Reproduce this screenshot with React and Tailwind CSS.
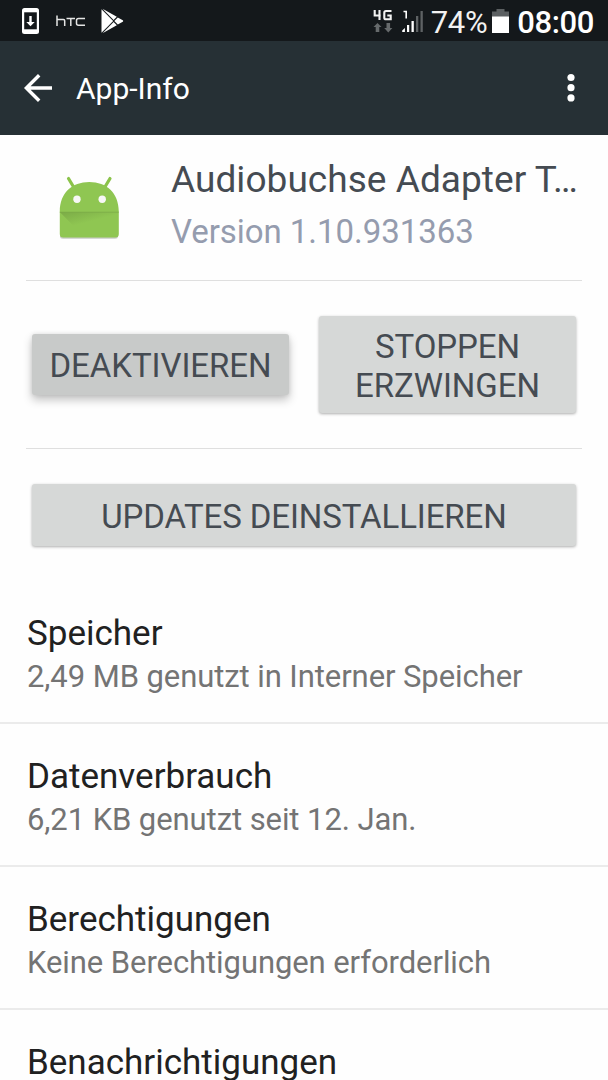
const settings = [
  { title: "Speicher", detail: "2,49 MB genutzt in Interner Speicher" },
  { title: "Datenverbrauch", detail: "6,21 KB genutzt seit 12. Jan." },
  { title: "Berechtigungen", detail: "Keine Berechtigungen erforderlich" },
];

function StatusBar() {
  return (
    <div className="flex h-[41px] shrink-0 items-center bg-[#14181b] text-white">
      <svg className="ml-[21px] h-[28px] w-[19px]" viewBox="0 0 19 28">
        <rect x="1" y="1" width="17" height="26" rx="2.5" fill="#fff" />
        <rect x="3.2" y="5.3" width="12.6" height="17" fill="#14181b" />
        <path d="M8.3 9h2.4v6h3l-4.2 4.3L5.3 15h3z" fill="#fff" />
      </svg>
      <svg className="ml-[16px] h-[12px] w-[30px]" viewBox="0 0 30 12" fill="none" stroke="#e5e5e5" strokeWidth="1.5">
        <path d="M1 .5v10.500M1 4.500h6.500q1.200 0 1.200 1.200V11M10.500 3.500h8.500M14.800 3.500V11M29 3.500h-6.500q-2 0-2 2v3q0 1.700 2 1.700H29" />
      </svg>
      <svg className="ml-[14px] h-[26px] w-[24px]" viewBox="0 0 24 26">
        <path d="M1.500 1.200v23.600L13.200 13z" fill="#fff" />
        <path d="M2.500.7 16.800 8.800 13.600 12z" fill="#fff" />
        <path d="M2.500 25.300 16.800 17.200 13.600 14z" fill="#fff" />
        <path d="m17.800 9.400 5 2.900q.9.700 0 1.400l-5 2.900L14.300 13z" fill="#fff" />
      </svg>
      <svg className="mt-[2px] ml-auto h-[28px] w-[20px]" viewBox="0 0 20 28" fill="none">
        <path d="M1.700 2v5.500h6M6.500 2v10M18.500 3h-5.500q-1.700 0-1.700 1.700v5q0 1.600 1.700 1.600h4.700V7.500h-3.400" stroke="#f3f3f3" strokeWidth="2.100" />
        <path d="M4.500 15 8.500 19H6.300v5H2.700v-5H.5zM13.500 15h3.600v5h2.300l-4.100 4.500-4.100-4.500h2.300z" fill="#666a6c" />
      </svg>
      <svg className="ml-[8px] h-[24px] w-[23px]" viewBox="0 0 23 24">
        <path d="M2.500 2.500h2.700v7" fill="none" stroke="#fff" strokeWidth="1.600" />
        <path d="M1.200 23v-1.500l2.700-2.500v4zM6 23v-7h2.200v7zM10.500 23V12h2.300v11z" fill="#fff" />
        <path d="M15 23V7h2.300v16zM19.500 23V2h2.300v21z" fill="#5e6264" />
      </svg>
      <span className="ml-[7px] pt-[4px] text-[31px] leading-[40px] tracking-[-0.3px] text-[#f2f2f2]">74%</span>
      <svg className="ml-[5px] h-[26px] w-[17px]" viewBox="0 0 17 26">
        <path d="M4.500 1h8v2.500H17V9H0V3.500h4.500z" fill="#5c6062" />
        <path d="M0 8.500h17V25H0z" fill="#fff" />
      </svg>
      <span className="mr-[14px] ml-[8px] pt-[4px] text-[31px] leading-[40px] font-medium tracking-[-0.400px]">08:00</span>
    </div>
  );
}

function AppBar() {
  return (
    <header className="flex h-[94px] shrink-0 items-center bg-[#263035] text-white">
      <svg className="ml-[23px] h-[30px] w-[30px]" viewBox="0 0 30 30" fill="none" stroke="#fff" strokeWidth="3.400">
        <path d="M29 15H3.500M16.200 2.200 3.400 15l12.800 12.800" />
      </svg>
      <h1 className="ml-[23px] pt-[2px] text-[30px] leading-[36px]">App-Info</h1>
      <svg className="mr-[33px] ml-auto h-[30px] w-[8px]" viewBox="0 0 8 30" fill="#fff">
        <circle cx="4" cy="4.500" r="3.600" />
        <circle cx="4" cy="14.700" r="3.600" />
        <circle cx="4" cy="24.900" r="3.600" />
      </svg>
    </header>
  );
}

function AndroidIcon() {
  return (
    <svg className="mt-[39px] ml-[31px] h-[66px] w-[64px] shrink-0" viewBox="0 0 64 66">
      <defs>
        <linearGradient id="fold" x1="0" y1="0" x2="0.600" y2="1">
          <stop offset="0" stopColor="#4c6b2c" stopOpacity=".3" />
          <stop offset=".5" stopColor="#4c6b2c" stopOpacity="0" />
        </linearGradient>
      </defs>
      <path d="M3 59v3.300q0 2.500 3 2.500h52q3 0 3-2.500V59z" fill="#c8cbc6" />
      <path d="m11.500 4.500 6 10M53 4.500l-6 10" stroke="#8bc34a" strokeWidth="3.200" strokeLinecap="round" />
      <path d="M2.800 37.500C2.800 19 15 8 32.300 8s29.500 11 29.500 29.500V60q0 3.500-3.500 3.500H6.300q-3.500 0-3.500-3.500z" fill="#8fc652" />
      <path d="M2.800 38H61.800v25.500H28z" fill="url(#fold)" />
      <path d="M2.800 37.700h59v.7h-59z" fill="#7baa47" />
      <circle cx="20" cy="25.300" r="3.700" fill="#f7f7f7" />
      <circle cx="45.200" cy="25.300" r="3.700" fill="#f7f7f7" />
    </svg>
  );
}

export default function App() {
  return (
    <div className="flex h-[1080px] w-[608px] flex-col overflow-hidden bg-[#fefefe] font-[Roboto,sans-serif]">
      <StatusBar />
      <AppBar />
      <main className="flex flex-col">
        <section className="mx-[26px] flex h-[146px] border-b border-[#dfdfdf]">
          <AndroidIcon />
          <div className="ml-[50px] pt-[23px] whitespace-nowrap">
            <div className="text-[37px] leading-[44px] tracking-[0.05px] text-[#454b52]">Audiobuchse Adapter T…</div>
            <div className="mt-[10px] text-[33px] leading-[40px] tracking-[-0.050px] text-[#959cae]">Version 1.10.931363</div>
          </div>
        </section>
        <section className="mx-[26px] flex h-[168px] items-center justify-between border-b border-[#dfdfdf] px-[6px] text-[33px] leading-[38.500px] text-[#454b52]">
          <button className="h-[61px] w-[257px] rounded-[3px] bg-[#c8cac9] pt-[4px] tracking-[-0.050px] shadow-[0_5px_10px_rgba(0,0,0,0.23),0_0_4px_rgba(0,0,0,0.1)]">DEAKTIVIEREN</button>
          <button className="h-[97px] w-[257px] rounded-[3px] bg-[#d6d8d7] pt-[4px] tracking-[-0.050px] shadow-[0_1px_3px_rgba(0,0,0,0.32)]">
            STOPPEN
            <br />
            ERZWINGEN
          </button>
        </section>
        <button className="mx-[32px] mt-[35px] h-[62px] rounded-[3px] bg-[#d6d8d7] pt-[3px] text-[33px] leading-[38px] tracking-[-0.100px] text-[#454b52] shadow-[0_1px_3px_rgba(0,0,0,0.32)]">
          UPDATES DEINSTALLIEREN
        </button>
        <section className="mt-[35px] flex flex-col">
          {settings.map((item) => (
            <div key={item.title} className="flex h-[143px] flex-col border-b-2 border-[#ebebeb] px-[27px] pt-[31px]">
              <h2 className="text-[35px] leading-[44px] text-[#212121]">{item.title}</h2>
              <p className="text-[31px] leading-[42px] tracking-[-0.080px] text-[#747474]">{item.detail}</p>
            </div>
          ))}
          <div className="px-[27px] pt-[31px]">
            <h2 className="text-[35px] leading-[44px] text-[#212121]">Benachrichtigungen</h2>
          </div>
        </section>
      </main>
    </div>
  );
}
